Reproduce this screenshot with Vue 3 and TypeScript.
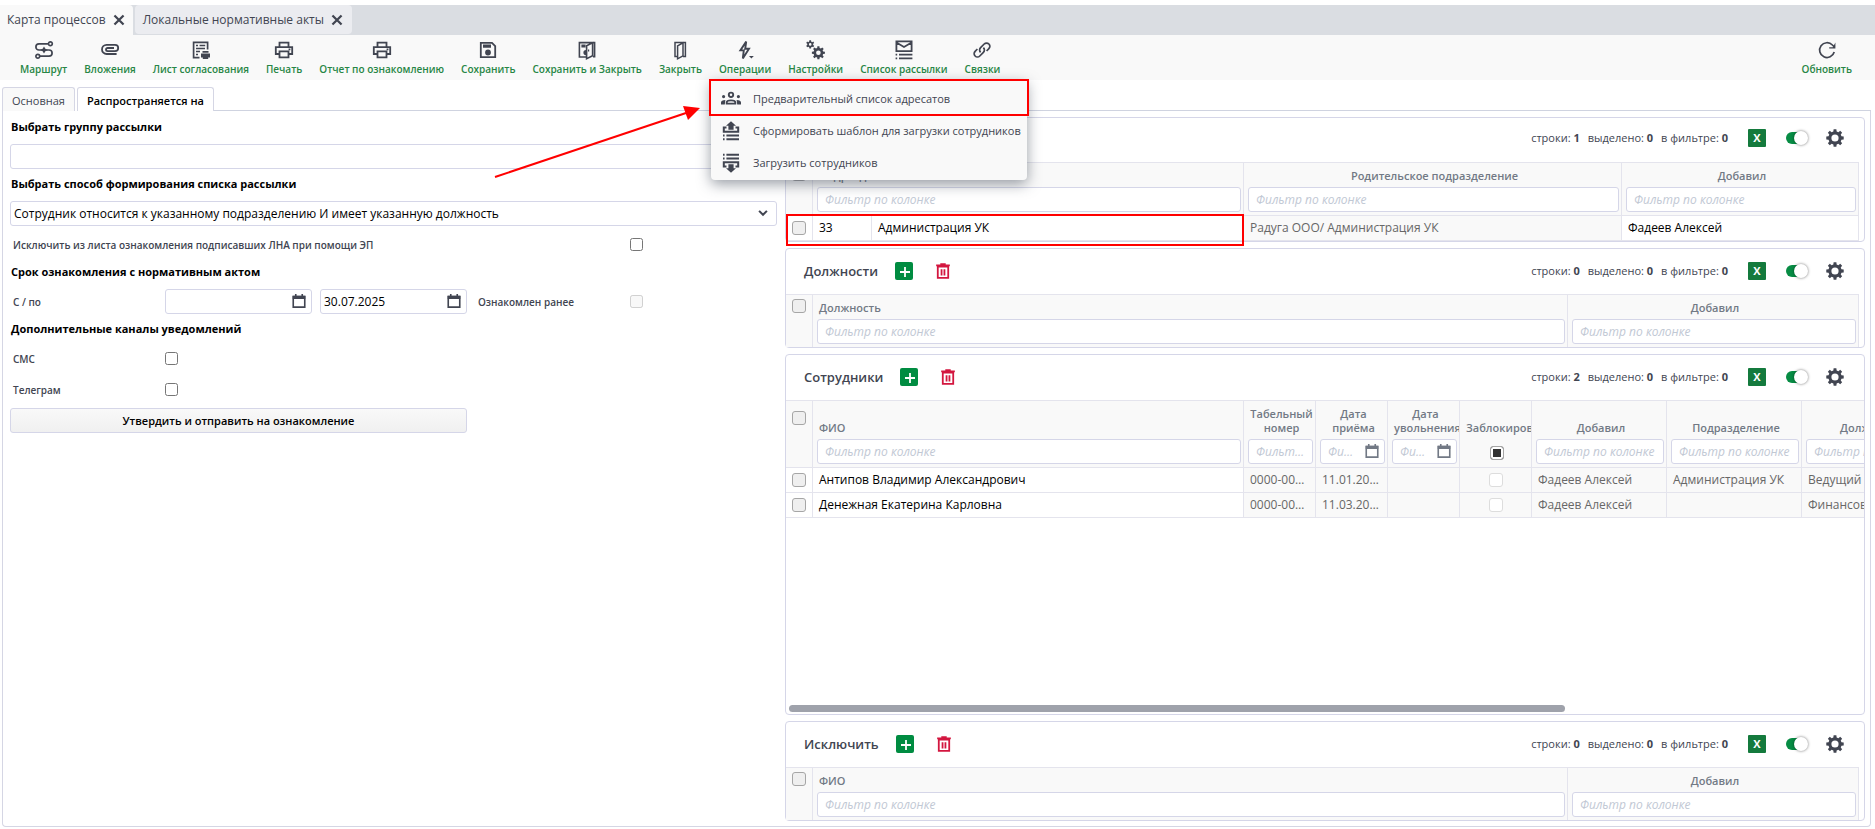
<script setup lang="ts">
import { ref } from 'vue'

interface Icon {
  line?: string
  fill?: string
  width?: number
}

/* Outline of a cog wheel: trapezoid teeth round a circle, with a round hole. */
function cog(cx: number, cy: number, outer: number, inner: number, hole: number, teeth: number): string {
  const step = (Math.PI * 2) / teeth
  const points: string[] = []
  for (let i = 0; i < teeth; i++) {
    const base = i * step - Math.PI / 2
    const corners: [number, number][] = [[-0.32, inner], [-0.2, outer], [0.2, outer], [0.32, inner]]
    for (const [turn, radius] of corners) {
      const a = base + turn * step
      points.push(`${(cx + Math.cos(a) * radius).toFixed(2)} ${(cy + Math.sin(a) * radius).toFixed(2)}`)
    }
  }
  return `M${points.join('L')}ZM${cx - hole} ${cy}a${hole} ${hole} 0 1 0 ${hole * 2} 0a${hole} ${hole} 0 1 0 ${-hole * 2} 0z`
}

const icons: Record<string, Icon> = {
  route: {
    line: 'M14.500 3.800H5a3.100 3.100 0 0 0 0 6.200h10a3.100 3.100 0 0 1 0 6.200H5.700M14.500 3.800a1.900 1.900 0 1 0 3.800 0a1.900 1.900 0 1 0-3.800 0M1.900 16.200a1.900 1.900 0 1 0 3.800 0a1.900 1.900 0 1 0-3.800 0',
    fill: 'M10 6.600l1.400 2.100L14 10l-2.600 1.300L10 13.400l-1.400-2.100L6 10l2.600-1.300z',
    width: 1.7
  },
  clip: { line: 'M16.600 14H6.600a4.600 4.600 0 0 1 0-9.200H15a3.200 3.200 0 0 1 0 6.400H7.600a1.600 1.600 0 0 1 0-3.200H14', width: 1.8 },
  sheet: {
    line: 'M8.500 17.600H2.600V2.400h14v7M5 5.500h2M8.600 5.500h5.600M5 8.500h9M5 11.500h4M5 14.500h2',
    fill: 'M11.500 11h6v1.800h-6zM10 13.400h9v4h-1.800v1.600h-5.400v-1.600H10z',
    width: 1.7
  },
  print: { line: 'M5.500 7V2.600h9V7M5.500 14H1.800V7.200h16.400V14h-3.700M5.500 11.400h9v6h-9zM14.600 9.400h1.800', width: 1.8 },
  save: { line: 'M2.800 2.800H14L17.200 6v11.200H2.800z', fill: 'M5 4.600h8v3.200H5zM10 9.600a2.900 2.900 0 1 1 0 5.800a2.900 2.900 0 1 1 0-5.800z', width: 1.8 },
  saveClose: {
    line: 'M9 17H2.400V2.600h15.200v14H16M9.600 5.800l6-3v13l-6 3z',
    fill: 'M4.400 4.600h4.200v3H4.400zM9 10v5.200a2.600 2.600 0 0 1 0-5.200zM11 9.500h1.200v2H11z',
    width: 1.6
  },
  door: { line: 'M7.400 16.600H5V2.400h10.400v14H13M7.600 5.800l5.400-3v13l-5.400 3z', width: 1.500 },
  bolt: { line: 'M11.200 1.600L5.400 10.400h3.400l-1 8L14 8.800h-3.800z', fill: 'M14 16h4.800l-2.400 2.600z', width: 1.900 },
  gears: { fill: cog(4.2, 4.4, 4.2, 3, 1.3, 6) + cog(12.4, 12.8, 6.600, 4.900, 2.300, 8) },
  mail: { line: 'M2.400 1.400h15.200v9.800H2.400zM2.400 2.400l7.600 4.600 7.600-4.600M1.600 14.600h1.600M5 14.600h13.400M1.600 18.400h1.600M5 18.400h13.400', width: 1.8 },
  link: { line: 'M8.600 12.400a3.400 3.400 0 0 1 0-4.800l3.600-3.600a3.300 3.300 0 0 1 4.700 4.700l-2.300 2.300M11.400 7.600a3.400 3.400 0 0 1 0 4.800L7.800 16a3.300 3.300 0 0 1-4.700-4.700l2.300-2.300', width: 1.7 },
  refresh: { line: 'M17.200 12A7.400 7.400 0 1 1 15.400 5L17.600 7.200', fill: 'M18.400 2.400v6.200h-6.200v-1.400h3.600z', width: 1.7 },
  people: {
    line: 'M10 3.600a2.200 2.200 0 1 0 0 4.400a2.200 2.200 0 1 0 0-4.400zM5.700 14.600v-1c0-1.400 2-2.200 4.300-2.200s4.300.8 4.300 2.200v1z',
    fill: 'M2.600 6a1.600 1.600 0 1 1 0 3.200a1.600 1.600 0 1 1 0-3.200zM17.400 6a1.600 1.600 0 1 1 0 3.200a1.600 1.600 0 1 1 0-3.200zM3.800 15.600H0v-2c0-1.500 1.400-2.600 4.400-2.600zM16.200 15.600H20v-2c0-1.500-1.400-2.600-4.400-2.600z',
    width: 1.9
  },
  upload: { line: 'M5.500 6.600H2.800v4.200h14.400V6.600h-2.700M2 14.400h1.600M5.400 14.400H18M2 18.200h1.600M5.400 18.200H18', fill: 'M10 .2l5 4.600h-2.400v4H7.400v-4H5z', width: 2 },
  download: { line: 'M5.500 13.400H2.800V9.200h14.400v4.200h-2.700M2 1.800h1.600M5.400 1.800H18M2 5.400h1.600M5.400 5.400H18', fill: 'M10 19.800l5-4.600h-2.400v-4H7.400v4H5z', width: 2 },
  calendar: { line: 'M3.600 5h12.800v11.800H3.600zM6.400 2.200v3M13.600 2.200v3', fill: 'M3 4.200h14v3.600H3z', width: 1.8 },
  trash: { line: 'M4.200 5h11.600v12.600H4.200zM2.400 3.800h15.200M7 2.400h6M8.400 8v7M11.600 8v7', width: 2 },
  gear: { fill: cog(10, 10, 9.8, 7.4, 4, 8) },
  cross: { line: 'M3.500 3.500l13 13M16.500 3.500l-13 13', width: 3.2 },
  plus: { line: 'M10 5v10M5 10h10', width: 1.8 },
  chevron: { line: 'M3.500 6.500l6.500 6.500 6.500-6.500', width: 3.4 }
}

const tools = [
  { icon: 'route', label: 'Маршрут' },
  { icon: 'clip', label: 'Вложения' },
  { icon: 'sheet', label: 'Лист согласования' },
  { icon: 'print', label: 'Печать' },
  { icon: 'print', label: 'Отчет по ознакомлению' },
  { icon: 'save', label: 'Сохранить' },
  { icon: 'saveClose', label: 'Сохранить и Закрыть' },
  { icon: 'door', label: 'Закрыть' },
  { icon: 'bolt', label: 'Операции' },
  { icon: 'gears', label: 'Настройки' },
  { icon: 'mail', label: 'Список рассылки' },
  { icon: 'link', label: 'Связки' }
]

const operations = [
  { icon: 'people', label: 'Предварительный список адресатов', marked: true },
  { icon: 'upload', label: 'Сформировать шаблон для загрузки сотрудников', marked: false },
  { icon: 'download', label: 'Загрузить сотрудников', marked: false }
]

interface Column {
  label: string
  kind?: 'date' | 'check'
  left?: boolean
  span?: number
}
interface Cell {
  text?: string
  check?: boolean
  plain?: boolean
}
interface Panel {
  id: string
  title?: string
  total: number
  sizes: string[]
  columns: Column[]
  rows: Cell[][]
  wide?: boolean
  markFirst?: boolean
}

const panels: Panel[] = [
  {
    id: 'units',
    total: 1,
    sizes: ['num', 'auto', 'parent', 'author'],
    columns: [
      { label: 'Подразделение', left: true, span: 2 },
      { label: 'Родительское подразделение' },
      { label: 'Добавил' }
    ],
    rows: [[{ text: '33', plain: true }, { text: 'Администрация УК', plain: true }, { text: 'Радуга ООО/ Администрация УК' }, { text: 'Фадеев Алексей', plain: true }]],
    markFirst: true
  },
  {
    id: 'posts',
    title: 'Должности',
    total: 0,
    sizes: ['auto', 'added'],
    columns: [{ label: 'Должность', left: true }, { label: 'Добавил' }],
    rows: []
  },
  {
    id: 'staff',
    title: 'Сотрудники',
    total: 2,
    sizes: ['name', 'small', 'small', 'small', 'small', 'mid', 'mid', 'mid'],
    columns: [
      { label: 'ФИО', left: true },
      { label: 'Табельный номер' },
      { label: 'Дата приёма', kind: 'date' },
      { label: 'Дата увольнения', kind: 'date' },
      { label: 'Заблокирован', kind: 'check' },
      { label: 'Добавил' },
      { label: 'Подразделение' },
      { label: 'Должность' }
    ],
    rows: [
      [{ text: 'Антипов Владимир Александрович', plain: true }, { text: '0000-00001' }, { text: '11.01.2021' }, {}, { check: true }, { text: 'Фадеев Алексей' }, { text: 'Администрация УК' }, { text: 'Ведущий' }],
      [{ text: 'Денежная Екатерина Карловна', plain: true }, { text: '0000-00002' }, { text: '11.03.2021' }, {}, { check: true }, { text: 'Фадеев Алексей' }, {}, { text: 'Финансовый' }]
    ],
    wide: true
  },
  {
    id: 'exclude',
    title: 'Исключить',
    total: 0,
    sizes: ['auto', 'added'],
    columns: [{ label: 'ФИО', left: true }, { label: 'Добавил' }],
    rows: []
  }
]

const group = ref('')
const dateFrom = ref('')
const dateTo = ref('30.07.2025')
</script>

<template>
  <div class="page">
    <nav class="windows">
      <div class="window active">
        <a href="#map">Карта процессов</a>
        <button type="button" aria-label="Закрыть вкладку"><svg class="ico cross" viewBox="0 0 20 20"><path class="line" :d="icons.cross.line" :stroke-width="icons.cross.width" /></svg></button>
      </div>
      <div class="window">
        <a href="#acts">Локальные нормативные акты</a>
        <button type="button" aria-label="Закрыть вкладку"><svg class="ico cross" viewBox="0 0 20 20"><path class="line" :d="icons.cross.line" :stroke-width="icons.cross.width" /></svg></button>
      </div>
    </nav>

    <header class="toolbar">
      <div v-for="tool in tools" :key="tool.label" class="slot">
        <button type="button" class="tool">
          <svg class="ico" viewBox="0 0 20 20">
            <path v-if="icons[tool.icon].line" class="line" :d="icons[tool.icon].line" :stroke-width="icons[tool.icon].width" />
            <path v-if="icons[tool.icon].fill" class="fill" :d="icons[tool.icon].fill" />
          </svg>
          <span>{{ tool.label }}</span>
        </button>
        <div v-if="tool.icon === 'bolt'" class="menu">
          <button v-for="op in operations" :key="op.label" type="button" class="entry" :class="{ marked: op.marked }">
            <svg class="ico" viewBox="0 0 20 20">
              <path class="line" :d="icons[op.icon].line" :stroke-width="icons[op.icon].width" />
              <path class="fill" :d="icons[op.icon].fill" />
            </svg>
            <span>{{ op.label }}</span>
          </button>
          <svg class="arrow" viewBox="0 0 208 74">
            <path d="M1 71L192 7" />
            <polygon points="206,2 189,0 194,14" />
          </svg>
        </div>
      </div>
      <div class="slot last">
        <button type="button" class="tool">
          <svg class="ico" viewBox="0 0 20 20">
            <path class="line" :d="icons.refresh.line" :stroke-width="icons.refresh.width" />
            <path class="fill" :d="icons.refresh.fill" />
          </svg>
          <span>Обновить</span>
        </button>
      </div>
    </header>

    <nav class="tabs">
      <a href="#main" class="tab">Основная</a>
      <a href="#scope" class="tab current">Распространяется на</a>
      <i class="rule"></i>
    </nav>

    <main class="body">
      <form class="form" @submit.prevent>
        <label class="head" for="group">Выбрать группу рассылки</label>
        <input id="group" v-model="group" class="box" type="text" />
        <label class="head" for="mode">Выбрать способ формирования списка рассылки</label>
        <div class="pick">
          <select id="mode" class="box">
            <option>Сотрудник относится к указанному подразделению И имеет указанную должность</option>
          </select>
          <svg class="ico tiny" viewBox="0 0 20 20"><path class="line" :d="icons.chevron.line" :stroke-width="icons.chevron.width" /></svg>
        </div>
        <div class="row">
          <label class="four" for="signed">Исключить из листа ознакомления подписавших ЛНА при помощи ЭП</label>
          <input id="signed" type="checkbox" />
        </div>
        <h2 class="head">Срок ознакомления с нормативным актом</h2>
        <div class="row">
          <label for="from">С / по</label>
          <div class="date">
            <input id="from" v-model="dateFrom" class="box" type="text" />
            <svg class="ico cal" viewBox="0 0 20 20"><path class="line" :d="icons.calendar.line" :stroke-width="icons.calendar.width" /><path class="fill" :d="icons.calendar.fill" /></svg>
          </div>
          <div class="date">
            <input v-model="dateTo" class="box" type="text" aria-label="по" />
            <svg class="ico cal" viewBox="0 0 20 20"><path class="line" :d="icons.calendar.line" :stroke-width="icons.calendar.width" /><path class="fill" :d="icons.calendar.fill" /></svg>
          </div>
          <label for="earlier">Ознакомлен ранее</label>
          <input id="earlier" type="checkbox" disabled />
        </div>
        <h2 class="head">Дополнительные каналы уведомлений</h2>
        <div class="row">
          <label for="sms">СМС</label>
          <input id="sms" type="checkbox" />
        </div>
        <div class="row">
          <label for="tg">Телеграм</label>
          <input id="tg" type="checkbox" />
        </div>
        <div class="row">
          <button class="submit" type="submit">Утвердить и отправить на ознакомление</button>
        </div>
      </form>

      <div class="panels">
        <section v-for="panel in panels" :key="panel.id" class="panel" :class="{ grow: panel.wide }">
          <div class="bar" :class="{ bare: !panel.title }">
            <template v-if="panel.title">
              <h3>{{ panel.title }}</h3>
              <button type="button" class="add" aria-label="Добавить"><svg class="ico" viewBox="0 0 20 20"><path class="line" :d="icons.plus.line" :stroke-width="icons.plus.width" /></svg></button>
              <button type="button" class="del" aria-label="Удалить"><svg class="ico" viewBox="0 0 20 20"><path class="line" :d="icons.trash.line" :stroke-width="icons.trash.width" /></svg></button>
            </template>
            <p class="stats">
              <span>строки: <b>{{ panel.total }}</b></span>
              <span>выделено: <b>0</b></span>
              <span>в фильтре: <b>0</b></span>
            </p>
            <button type="button" class="excel">X</button>
            <input type="checkbox" class="toggle" checked aria-label="Фильтры" />
            <button type="button" class="cog" aria-label="Настройки таблицы"><svg class="ico" viewBox="0 0 20 20"><path class="fill" :d="icons.gear.fill" /></svg></button>
          </div>
          <div class="scroller" :class="{ wide: panel.wide }">
            <table>
              <colgroup>
                <col class="c-check" />
                <col v-for="(size, i) in panel.sizes" :key="i" :class="'c-' + size" />
              </colgroup>
              <thead>
                <tr>
                  <th class="tick"><input type="checkbox" class="mark" aria-label="Выбрать все" /></th>
                  <th v-for="col in panel.columns" :key="col.label" :colspan="col.span || 1" :class="{ start: col.left }">
                    <div class="name">{{ col.label }}</div>
                    <div class="filter">
                      <input v-if="col.kind === 'check'" type="checkbox" class="mark mixed" :aria-label="col.label" />
                      <template v-else>
                        <input type="text" class="box" :class="{ dated: col.kind === 'date' }" placeholder="Фильтр по колонке" :aria-label="col.label" />
                        <svg v-if="col.kind === 'date'" class="ico cal" viewBox="0 0 20 20"><path class="line" :d="icons.calendar.line" :stroke-width="icons.calendar.width" /><path class="fill" :d="icons.calendar.fill" /></svg>
                      </template>
                    </div>
                  </th>
                </tr>
              </thead>
              <tbody>
                <tr v-for="(row, r) in panel.rows" :key="r">
                  <td class="tick plain"><input type="checkbox" class="mark" aria-label="Выбрать строку" /></td>
                  <td v-for="(cell, c) in row" :key="c" :class="{ plain: cell.plain }">
                    <input v-if="cell.check" type="checkbox" class="mark pale" disabled aria-label="Заблокирован" />
                    <template v-else>{{ cell.text }}</template>
                  </td>
                </tr>
              </tbody>
            </table>
            <i v-if="panel.markFirst" class="frame"></i>
          </div>
          <div v-if="panel.wide" class="thumb"></div>
        </section>
      </div>
    </main>
  </div>
</template>

<style>
body {
  margin: 0;
  background: #fff;
}
</style>

<style scoped>
.page {
  box-sizing: border-box;
  min-height: 100vh;
  padding: 5px 0 2px;
  display: flex;
  flex-direction: column;
  overflow: hidden;
  font-family: "Open Sans", "Noto Sans", sans-serif;
  font-size: 12px;
  line-height: 16px;
  color: #414551;
}
.page *,
.page *::before {
  box-sizing: border-box;
}
button,
input,
select {
  font: inherit;
  color: inherit;
  margin: 0;
}
button {
  border: 0;
  padding: 0;
  background: none;
  cursor: pointer;
}
a {
  color: inherit;
  text-decoration: none;
}
.ico {
  display: block;
  width: 20px;
  height: 20px;
  flex: none;
  overflow: visible;
}
.line {
  fill: none;
  stroke: currentColor;
}
.fill {
  fill: currentColor;
  fill-rule: evenodd;
}

.windows {
  display: flex;
  gap: 2px;
  height: 30px;
  background: #dadde2;
}
.window {
  display: flex;
  align-items: center;
  gap: 6px;
  height: 29px;
  padding: 0 8px;
  border-radius: 4px;
  background: #ebecf0;
}
.window.active {
  height: 30px;
  padding: 0 7px;
  border-radius: 0 4px 0 0;
  background: #f9f9f9;
}
.cross {
  width: 14px;
  height: 14px;
}

.toolbar {
  display: flex;
  height: 45px;
  padding: 0 15px 0 11px;
  background: #f9f9f9;
}
.slot {
  position: relative;
}
.slot.last {
  margin-left: auto;
}
.tool {
  display: flex;
  flex-direction: column;
  align-items: center;
  gap: 2px;
  height: 45px;
  padding: 5px 8px 0 9px;
  font-size: 10px;
  line-height: 14px;
  font-weight: 600;
  white-space: nowrap;
}
.tool span {
  color: #278645;
}
.menu {
  position: absolute;
  z-index: 5;
  top: 45px;
  left: 1px;
  padding: 3px 0 1px;
  border-radius: 0 0 4px 4px;
  background: #f9f9f9;
  box-shadow: 0 4px 14px rgba(50, 60, 75, 0.5);
}
.entry {
  position: relative;
  display: flex;
  align-items: center;
  gap: 12px;
  width: 100%;
  height: 32px;
  padding: 0 6px 0 10px;
  font-size: 11px;
  white-space: nowrap;
}
.entry.marked::before {
  content: "";
  position: absolute;
  inset: -4px -2px -1px;
  border: 2px solid #f00;
}
.arrow {
  position: absolute;
  top: 26px;
  left: -217px;
  width: 208px;
  height: 74px;
}
.arrow path {
  fill: none;
  stroke: #f00;
  stroke-width: 2;
}
.arrow polygon {
  fill: #f00;
}

.tabs {
  display: flex;
  gap: 2px;
  padding: 7px 4px 0 2px;
}
.tab {
  height: 24px;
  padding: 5px 9px 0;
  border: 1px solid #d5d6e4;
  border-bottom: 0;
  border-radius: 3px 3px 0 0;
  background: #f9f9f9;
  font-size: 11px;
}
.tab.current {
  background: #fff;
  color: #000;
  font-weight: 600;
}
.rule {
  flex: 1;
  margin-left: -2px;
  border-bottom: 1px solid #cfd3e0;
}

.body {
  flex: 1;
  display: grid;
  grid-template-columns: minmax(0, 767fr) minmax(0, 1080fr);
  gap: 8px;
  margin: 0 4px 0 2px;
  padding: 6px 5px 5px 7px;
  border: 1px solid #d5d6e4;
  border-top: 0;
  border-radius: 0 0 4px 4px;
}
.form {
  display: flex;
  flex-direction: column;
  padding-top: 1px;
}
.head {
  margin: 0;
  padding: 0 1px;
  height: 26px;
  font-size: 11px;
  line-height: 18px;
  font-weight: 700;
  color: #000;
}
.box {
  display: block;
  width: 100%;
  height: 25px;
  padding: 0 3px;
  border: 1px solid #d5d6e8;
  border-radius: 3px;
  background: #fff;
  font-size: 12px;
  color: #000;
  outline: 0;
}
.form > .box,
.pick {
  margin-bottom: 6px;
}
.pick,
.date,
.filter {
  position: relative;
}
.pick .box {
  appearance: none;
}
.tiny {
  position: absolute;
  top: 6px;
  right: 8px;
  width: 12px;
  height: 12px;
}
.row {
  display: grid;
  grid-template-columns: repeat(5, minmax(0, 1fr));
  gap: 8px;
  align-items: center;
  min-height: 25px;
  margin-bottom: 6px;
  font-size: 10px;
  font-weight: 600;
}
.row label {
  padding-left: 3px;
}
.row > input {
  width: 13px;
  height: 13px;
}
.four {
  grid-column: span 4;
}
.date .box {
  font-weight: 400;
}
.cal {
  position: absolute;
  top: 3px;
  right: 4px;
  width: 18px;
  height: 18px;
}
.submit {
  grid-column: span 3;
  height: 25px;
  border: 1px solid #d5d6e8;
  border-radius: 3px;
  background: linear-gradient(#f9f9f9, #f0f0f0);
  font-size: 11px;
  color: #000;
}

.panels {
  display: flex;
  flex-direction: column;
  gap: 6px;
}
.panel {
  display: flex;
  flex-direction: column;
  min-width: 0;
  border: 1px solid #d5d6e8;
  border-radius: 4px;
  background: #fff;
}
.panel.grow {
  flex: 1;
}
.bar {
  display: flex;
  align-items: center;
  height: 45px;
  padding: 0 20px 2px 18px;
}
.bar.bare {
  height: 44px;
  padding-bottom: 4px;
}
h3 {
  margin: 0;
  font-size: 13px;
  font-weight: 600;
}
.add {
  display: grid;
  place-items: center;
  width: 18px;
  height: 18px;
  margin: 0 21px 0 17px;
  border-radius: 2px;
  background: #008c41;
  color: #fff;
}
.del .ico {
  width: 18px;
  height: 18px;
  color: #d3163f;
}
.stats {
  display: flex;
  gap: 8px;
  margin: 0 20px 0 auto;
  font-size: 11px;
}
.stats b {
  font-weight: 700;
}
.excel {
  width: 18px;
  height: 18px;
  border-radius: 1px;
  background: #147a3d;
  color: #fff;
  font-size: 11px;
  font-weight: 700;
  line-height: 18px;
}
.toggle {
  appearance: none;
  position: relative;
  width: 20px;
  height: 12px;
  margin: 0 20px;
  border-radius: 6px;
  background: #078c44;
}
.toggle::before {
  content: "";
  position: absolute;
  top: -1px;
  left: 8px;
  width: 14px;
  height: 14px;
  border-radius: 50%;
  background: #fff;
  box-shadow: 0 0 3px rgba(0, 0, 0, 0.55);
}
.cog .ico {
  width: 18px;
  height: 18px;
}

.scroller {
  position: relative;
  padding-right: 5px;
}
.scroller.wide {
  flex: 1;
  padding-right: 0;
  overflow: hidden;
}
table {
  width: 100%;
  table-layout: fixed;
  border-collapse: separate;
  border-spacing: 0;
}
.wide table {
  width: 1151px;
}
.c-check { width: 27px; }
.c-num { width: 59px; }
.c-parent { width: 378px; }
.c-author { width: 237px; }
.c-added { width: 291px; }
.c-name { width: 431px; }
.c-small { width: 72px; }
.c-mid { width: 135px; }
th,
td {
  padding: 0;
  border-right: 1px solid #e4e4ed;
  background: #f9f9f9;
  overflow: hidden;
}
th {
  padding: 6px 2px 3px 4px;
  border-top: 1px solid #e4e4ed;
  vertical-align: bottom;
  font-size: 11px;
  font-weight: 600;
  line-height: 14px;
  color: #727985;
}
.name {
  padding-left: 2px;
  margin-bottom: 4px;
}
.start .name {
  text-align: left;
}
.filter {
  height: 25px;
}
.filter .box {
  padding: 0 7px;
  font-weight: 400;
  text-overflow: ellipsis;
}
.filter .box.dated {
  padding-right: 26px;
}
.box::placeholder {
  color: #c1c8d4;
  font-style: italic;
  opacity: 1;
}
td {
  height: 25px;
  padding: 0 6px;
  border-top: 1px solid #e4e4ed;
  color: #676767;
  white-space: nowrap;
  text-overflow: ellipsis;
}
tbody tr:last-child td {
  height: 26px;
  border-bottom: 1px solid #e4e4ed;
}
td.plain {
  background: #fff;
  color: #000;
}
th.tick,
td.tick {
  padding: 0 0 0 6px;
}
th.tick {
  padding-top: 4px;
  vertical-align: top;
}
.wide th.tick {
  padding-top: 10px;
}
.mark {
  appearance: none;
  display: block;
  width: 14px;
  height: 14px;
  border: 1px solid #a6a6a6;
  border-radius: 3px;
  background: #efefef;
}
.mark.mixed {
  position: relative;
  top: 7px;
  margin: 0 auto;
  background: #333;
  box-shadow: inset 0 0 0 2px #fff;
}
.mark.pale {
  margin: 0 auto;
  border-color: #ddd;
  background: #fff;
}
.frame {
  position: absolute;
  top: 52px;
  bottom: -5px;
  left: 0;
  right: 620px;
  border: 2px solid #f00;
}
.thumb {
  width: 72%;
  height: 7px;
  margin: 0 0 2px 3px;
  border-radius: 4px;
  background: #9fa2ab;
}
</style>
